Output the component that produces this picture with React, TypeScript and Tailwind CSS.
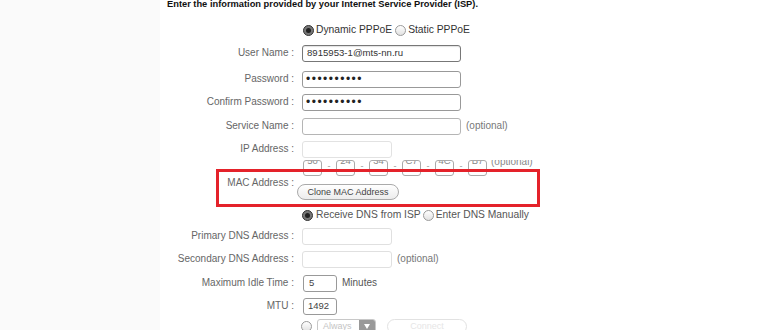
import React from "react";

function Row({
  label,
  className = "",
  children,
}: {
  label?: string;
  className?: string;
  children?: React.ReactNode;
}) {
  return (
    <div className={`flex h-[18px] shrink-0 items-center ${className}`}>
      <div className="w-[134px] shrink-0 whitespace-nowrap text-right text-[10px] leading-none text-[#666]">
        {label}
      </div>
      <div className="ml-[8px] flex items-center">{children}</div>
    </div>
  );
}

function Radio({ on = false }: { on?: boolean }) {
  if (on) {
    return (
      <span className="flex h-[11px] w-[11px] shrink-0 items-center justify-center rounded-full border border-[#333] bg-[#777]">
        <span className="block h-[5px] w-[5px] rounded-full bg-[#222]" />
      </span>
    );
  }
  return (
    <span className="block h-[11px] w-[11px] shrink-0 rounded-full border border-[#9a9a9a] bg-gradient-to-b from-white to-[#e2e2e2]" />
  );
}

const Optional = ({ className = "" }: { className?: string }) => (
  <span className={`text-[10px] leading-none text-[#777] ${className}`}>(optional)</span>
);

const macParts = ["50", "24", "34", "C7", "4C", "B7"];

export default function App() {
  return (
    <div className="relative h-[330px] w-[770px] overflow-hidden bg-white font-['Liberation_Sans',Arial,sans-serif]">
      <div className="flex h-full">
        <div className="w-[160px] shrink-0 bg-[#fafafa]" />
        <div className="flex flex-1 flex-col">
          <div className="h-[8px] shrink-0 whitespace-nowrap pl-[7px] text-[9.3px] font-bold leading-[8px] text-[#111]">
            Enter the information provided by your Internet Service Provider (ISP).
          </div>

          <Row className="mt-[13px]">
            <div className="flex items-center text-[10.3px] leading-none text-[#333]">
              <span className="ml-[1px]"><Radio on /></span>
              <span className="ml-[2px]">Dynamic PPPoE</span>
              <span className="ml-[3px]"><Radio /></span>
              <span className="ml-[2px]">Static PPPoE</span>
            </div>
          </Row>

          <Row label="User Name :" className="mt-[5px]">
            <div className="flex h-[17px] w-[159px] items-center rounded-[3px] border border-[#777] bg-white px-[4px] text-[9.6px] text-[#333] shadow-[inset_0_1px_1px_rgba(0,0,0,0.12)]">
              8915953-1@mts-nn.ru
            </div>
          </Row>

          <Row label="Password :" className="mt-[8px]">
            <div className="flex h-[17px] w-[159px] items-center rounded-[3px] border border-[#999] bg-white px-[3px] text-[12px] leading-none tracking-[1.5px] text-[#222]">
              ••••••••••
            </div>
          </Row>

          <Row label="Confirm Password :" className="mt-[5px]">
            <div className="flex h-[17px] w-[159px] items-center rounded-[3px] border border-[#999] bg-white px-[3px] text-[12px] leading-none tracking-[1.5px] text-[#222]">
              ••••••••••
            </div>
          </Row>

          <Row label="Service Name :" className="mt-[6px]">
            <div className="h-[17px] w-[159px] rounded-[3px] border border-[#b5b5b5] bg-white" />
            <Optional className="ml-[5px]" />
          </Row>

          <Row label="IP Address :" className="mt-[5px]">
            <div className="h-[17px] w-[90px] rounded-[3px] border border-[#e2e2e2] bg-white" />
          </Row>

          <div className="mt-[1px] flex h-[42px] shrink-0 items-center">
            <div className="w-[134px] shrink-0 pt-[6px] text-right text-[10px] leading-none text-[#666]">
              MAC Address :
            </div>
            <div className="ml-[3px] flex flex-col">
              <div className="ml-[6px] flex h-[16px] items-start">
                {macParts.map((p, i) => (
                  <React.Fragment key={p}>
                    <div className="h-[16px] w-[19px] overflow-hidden rounded-[3px] border border-[#aaa] bg-white text-center text-[9.5px] leading-none text-[#888]">
                      <div className="-mt-[5px]">{p}</div>
                    </div>
                    {i < 5 && (
                      <div className="w-[14px] text-center text-[9px] leading-none text-[#999]">
                        <div className="mt-[2px]">-</div>
                      </div>
                    )}
                  </React.Fragment>
                ))}
                <div className="ml-[4px] h-[9px] overflow-hidden text-[10px] leading-none text-[#888]">
                  <div className="-mt-[3px]">(optional)</div>
                </div>
              </div>
              <div className="mt-[8px] flex h-[16px] w-[102px] items-center justify-center rounded-full border border-[#aaa] bg-gradient-to-b from-white to-[#ececec] text-[9px] leading-none text-[#444]">
                Clone MAC Address
              </div>
            </div>
          </div>

          <Row className="mt-[5px]">
            <div className="flex items-center text-[10.3px] leading-none text-[#555]">
              <Radio on />
              <span className="ml-[3px]">Receive DNS from ISP</span>
              <span className="ml-[2px]"><Radio /></span>
              <span className="ml-[2px]">Enter DNS Manually</span>
            </div>
          </Row>

          <Row label="Primary DNS Address :" className="mt-[3px]">
            <div className="h-[17px] w-[90px] rounded-[3px] border border-[#e0e0e0] bg-white" />
          </Row>

          <Row label="Secondary DNS Address :" className="mt-[5px]">
            <div className="h-[17px] w-[90px] rounded-[3px] border border-[#e0e0e0] bg-white" />
            <Optional className="ml-[5px]" />
          </Row>

          <Row label="Maximum Idle Time :" className="mt-[6px]">
            <div className="ml-[1px] flex h-[17px] w-[34px] items-center rounded-[3px] border border-[#999] bg-white px-[5px] text-[9.5px] text-[#444]">
              5
            </div>
            <span className="ml-[5px] text-[10px] leading-none text-[#555]">Minutes</span>
          </Row>

          <Row label="MTU :" className="mt-[5px]">
            <div className="ml-[1px] flex h-[17px] w-[34px] items-center rounded-[3px] border border-[#999] bg-white px-[4px] text-[9.5px] text-[#444]">
              1492
            </div>
          </Row>

          <Row className="mt-[2px]">
            <span className="-ml-[1px]"><Radio /></span>
            <div className="ml-[5px] flex h-[15px] w-[59px] items-center overflow-hidden rounded-[3px] border border-[#c8c8c8] bg-white">
              <span className="flex-1 pl-[5px] text-[9px] leading-none text-[#c4c4c4]">Always</span>
              <span className="flex h-full w-[16px] items-center justify-center bg-[#999]">
                <span className="block h-0 w-0 border-x-[3px] border-t-[5px] border-x-transparent border-t-white" />
              </span>
            </div>
            <div className="ml-[11px] flex h-[15px] w-[80px] items-center justify-center rounded-full border border-[#e2e2e2] bg-white text-[9px] leading-none text-[#e6e6e6]">
              Connect
            </div>
          </Row>
        </div>
      </div>

      <div className="absolute left-[216px] top-[169px] h-[38px] w-[324px] border-[3px] border-[#e4222a]" />
    </div>
  );
}
